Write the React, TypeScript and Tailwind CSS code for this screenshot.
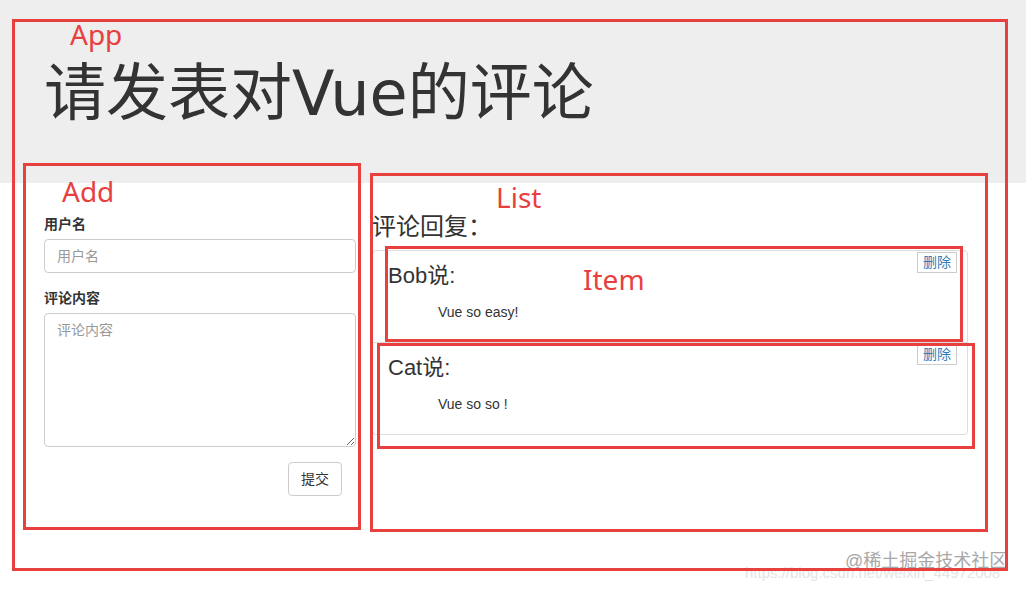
import { ReactNode } from "react";

const FONT = '"Liberation Sans", "Noto Sans CJK SC", sans-serif';

interface Comment {
  id: number;
  name: string;
  content: string;
}

const comments: Comment[] = [
  { id: 1, name: "Bob", content: "Vue so easy!" },
  { id: 2, name: "Cat", content: "Vue so so !" },
];

// red annotation frame drawn over the page
const Frame = ({ className }: { className: string }) => (
  <div className={`pointer-events-none absolute border-[3px] border-[#e8403f] ${className}`} />
);

const Tag = ({ className, children }: { className: string; children: ReactNode }) => (
  <div
    className={`pointer-events-none absolute text-[28px] leading-none text-[#e8403f] ${className}`}
    style={{ fontFamily: '"Noto Sans", sans-serif' }}
  >
    {children}
  </div>
);

const Add = () => (
  <div className="w-[312px] pt-[32px]">
    <label className="block text-[14px] font-bold leading-[18px] text-[#333] mb-[6px]">用户名</label>
    <input
      type="text"
      placeholder="用户名"
      className="block h-[34px] w-full rounded-[4px] border border-[#ccc] px-[12px] text-[14px] text-[#555] placeholder:text-[#999] outline-none"
    />
    <label className="mt-[16px] block text-[14px] font-bold leading-[18px] text-[#333] mb-[6px]">评论内容</label>
    <textarea
      placeholder="评论内容"
      className="block h-[134px] w-full rounded-[4px] border border-[#ccc] px-[12px] py-[6px] text-[14px] leading-[20px] text-[#555] placeholder:text-[#999] outline-none"
    />
    <div className="mt-[15px] flex justify-end pr-[14px]">
      <button className="h-[34px] rounded-[4px] border border-[#ccc] bg-white px-[12px] text-[14px] text-[#333]">
        提交
      </button>
    </div>
  </div>
);

const Item = ({ comment, first, last }: { comment: Comment; first: boolean; last: boolean }) => (
  <li
    className={`relative border border-[#ddd] bg-white px-[15px] py-[10px] ${last ? "rounded-b-[4px]" : "-mb-px"} ${
      first ? "rounded-t-[4px]" : ""
    }`}
  >
    <div className="absolute right-[10px] top-[1px] w-[40px] border border-[#ccc] bg-white text-center">
      <a href="#" className="block text-[14px] leading-[19px] text-[#337ab7] no-underline">
        删除
      </a>
    </div>
    <h4 className="text-[22px] leading-[30px] text-[#333]">{comment.name}说:</h4>
    <p className="mb-[10px] mt-[11px] px-[50px] text-[14px] leading-[20px] text-[#333]">{comment.content}</p>
  </li>
);

const List = () => (
  <div className="w-[596px] pt-[31px]">
    <h3 className="mb-[10px] text-[24px] leading-[26px] text-[#333]">评论回复：</h3>
    <ul>
      {comments.map((c, i) => (
        <Item key={c.id} comment={c} first={i === 0} last={i === comments.length - 1} />
      ))}
    </ul>
  </div>
);

export default function App() {
  return (
    <div className="relative h-[590px] w-[1026px] overflow-hidden bg-white" style={{ fontFamily: FONT }}>
      <header className="h-[183px] bg-[#eeeeee] pl-[44px] pt-[63px]">
        <h1 className="text-[62px] leading-[62px] text-[#333]">
          请发表对
          <span style={{ fontFamily: '"DejaVu Sans", sans-serif' }}>Vue</span>
          的评论
        </h1>
      </header>

      <div className="flex gap-[16px] pl-[44px]">
        <Add />
        <List />
      </div>

      {/* watermark */}
      <div className="pointer-events-none absolute left-[745px] top-[563px] text-[15px] leading-[20px] text-[#e4e4e4]">
        https://blog.csdn.net/weixin_44972008
      </div>
      <div className="pointer-events-none absolute left-[845px] top-[550px] text-[18px] leading-[22px] text-[#a8a8a8]">
        @稀土掘金技术社区
      </div>

      {/* annotations */}
      <Frame className="left-[12px] top-[19px] h-[552px] w-[996px]" />
      <Frame className="left-[23px] top-[163px] h-[367px] w-[338px]" />
      <Frame className="left-[370px] top-[173px] h-[359px] w-[618px]" />
      <Frame className="left-[385px] top-[246px] h-[96px] w-[578px]" />
      <Frame className="left-[377px] top-[343px] h-[106px] w-[598px]" />
      <Tag className="left-[70px] top-[20px]">App</Tag>
      <Tag className="left-[62px] top-[177px]">Add</Tag>
      <Tag className="left-[496px] top-[183px]">List</Tag>
      <Tag className="left-[583px] top-[265px]">Item</Tag>
    </div>
  );
}
